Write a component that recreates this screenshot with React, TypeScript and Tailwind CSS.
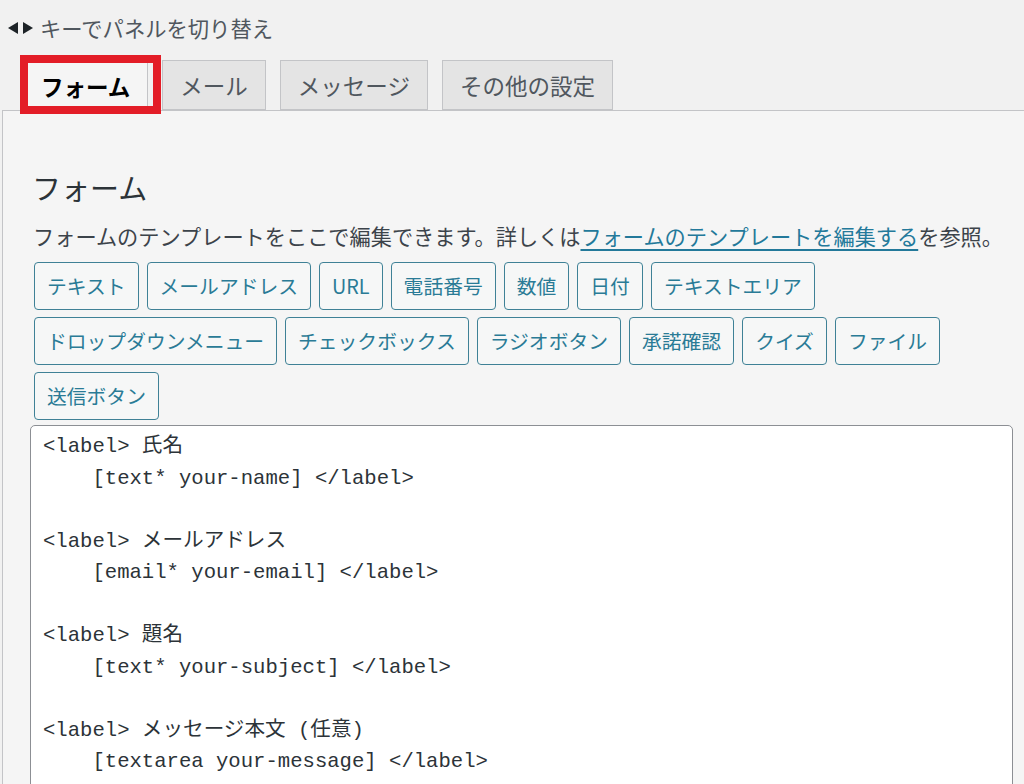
import React from "react";

const jp = { fontFamily: '"Noto Sans CJK JP", "Noto Sans", sans-serif' };
const mono = { fontFamily: '"Liberation Mono", "Noto Sans CJK JP", monospace' };

const rows: string[][] = [
  ["テキスト", "メールアドレス", "URL", "電話番号", "数値", "日付", "テキストエリア"],
  ["ドロップダウンメニュー", "チェックボックス", "ラジオボタン", "承諾確認", "クイズ", "ファイル"],
  ["送信ボタン"],
];

const code = `<label> 氏名
    [text* your-name] </label>

<label> メールアドレス
    [email* your-email] </label>

<label> 題名
    [text* your-subject] </label>

<label> メッセージ本文 (任意)
    [textarea your-message] </label>

[submit "送信"]`;

function Tab({ label }: { label: string }) {
  return (
    <div className="h-[50px] px-[17px] flex items-center bg-[#e4e4e4] border border-[#c3c4c7] text-[22.5px] text-[#50575e] leading-none">
      {label}
    </div>
  );
}

export default function App() {
  return (
    <div className="w-[1024px] h-[784px] overflow-hidden bg-[#f1f1f1]" style={jp}>
      <div className="h-[56px] flex items-center pl-[8px] text-[21.3px] text-[#50575e]">
        <svg width="26" height="14" viewBox="0 0 26 14" className="mr-[6px]">
          <polygon points="0,7 10,1 10,13" fill="#1d2327" />
          <polygon points="25,7 15,1 15,13" fill="#1d2327" />
        </svg>
        <span>キーでパネルを切り替え</span>
      </div>
      <div className="mt-[4px] -mb-px flex gap-[14px] pl-[23px] relative z-10">
        <div className="relative">
          <div className="h-[51px] px-[17px] flex items-center bg-[#f5f5f5] border border-b-0 border-[#c3c4c7] text-[22.5px] font-bold text-black leading-none">
            フォーム
          </div>
          <div className="absolute left-[-3px] right-[-13px] top-[-5px] bottom-[-3px] border-[8px] border-[#e31d27] pointer-events-none"></div>
        </div>
        <Tab label="メール" />
        <Tab label="メッセージ" />
        <Tab label="その他の設定" />
      </div>
      <div className="ml-[2px] w-[1060px] h-[700px] bg-[#f5f5f5] border border-[#c3c4c7] pl-[27px] pr-[30px] pt-[56px]">
        <div className="w-[983px]">
          <h2 className="ml-[2px] text-[29px] leading-[40px] text-[#2c3338] font-normal">フォーム</h2>
          <p className="ml-[3px] mt-[14px] text-[21.2px] leading-[30px] text-[#3c434a] whitespace-nowrap">
            フォームのテンプレートをここで編集できます。詳しくは
            <span className="text-[#23799a] underline underline-offset-[4px]">フォームのテンプレートを編集する</span>
            を参照。
          </p>
          <div className="ml-[4px] mt-[11px] flex flex-col gap-[7px]">
            {rows.map((r, i) => (
              <div key={i} className="flex gap-[8px]">
                {r.map((b) => (
                  <div
                    key={b}
                    className="h-[48px] px-[12px] flex items-center rounded-[4px] border border-[#3f8196] bg-[#f6f7f7] text-[#2a7b96] text-[19.8px] leading-none"
                  >
                    {b}
                  </div>
                ))}
              </div>
            ))}
          </div>
          <div
            className="mt-[5px] h-[420px] rounded-[5px] border border-[#8c8f94] bg-white pl-[12px] pt-[5px] text-[20.6px] leading-[31.5px] text-[#2c3338] whitespace-pre"
            style={mono}
          >
            {code}
          </div>
        </div>
      </div>
    </div>
  );
}
